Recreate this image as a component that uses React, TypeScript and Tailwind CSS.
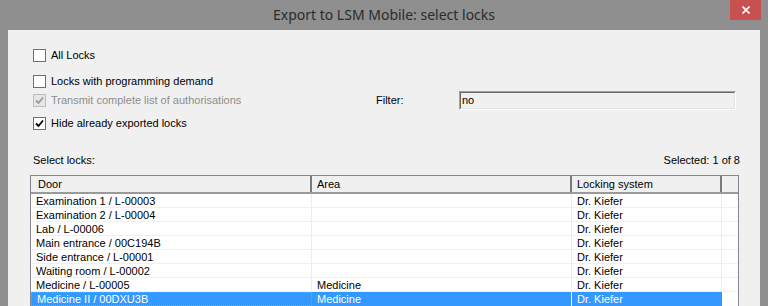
import React from "react";

const rows = [
  { door: "Examination 1 / L-00003", area: "", sys: "Dr. Kiefer" },
  { door: "Examination 2 / L-00004", area: "", sys: "Dr. Kiefer" },
  { door: "Lab / L-00006", area: "", sys: "Dr. Kiefer" },
  { door: "Main entrance / 00C194B", area: "", sys: "Dr. Kiefer" },
  { door: "Side entrance / L-00001", area: "", sys: "Dr. Kiefer" },
  { door: "Waiting room / L-00002", area: "", sys: "Dr. Kiefer" },
  { door: "Medicine / L-00005", area: "Medicine", sys: "Dr. Kiefer" },
  { door: "Medicine II / 00DXU3B", area: "Medicine", sys: "Dr. Kiefer", sel: true },
];

function Check({ checked, disabled }: { checked?: boolean; disabled?: boolean }) {
  return (
    <div
      className={
        "w-[13px] h-[13px] shrink-0 border flex items-center justify-center " +
        (disabled ? "border-[#bcbcbc] bg-[#e6e6e6]" : "border-[#707070] bg-white")
      }
    >
      {checked && (
        <svg width="9" height="9" viewBox="0 0 9 9">
          <path
            d="M1 4.5 L3.5 7 L8 1.5"
            fill="none"
            stroke={disabled ? "#9a9a9a" : "#000"}
            strokeWidth="1.8"
          />
        </svg>
      )}
    </div>
  );
}

export default function App() {
  return (
    <div
      className="w-[768px] h-[306px] bg-[#8f8f8f] flex flex-col overflow-hidden text-[11px] text-black"
      style={{ fontFamily: '"Liberation Sans", Arial, sans-serif' }}
    >
      {/* Title bar */}
      <div className="relative h-[30px] shrink-0 flex items-center justify-center pb-[1px]">
        <span
          className="text-[14px] text-[#2b2b2b] leading-none"
          style={{ fontFamily: '"Noto Sans", "Open Sans", sans-serif' }}
        >
          Export to LSM Mobile: select locks
        </span>
        <div className="absolute left-[730px] top-0 w-[31px] h-[20px] bg-[#c75050] flex items-center justify-center">
          <svg width="8" height="8" viewBox="0 0 8 8">
            <path d="M0.5 0.5 L7.5 7.5 M7.5 0.5 L0.5 7.5" stroke="#fff" strokeWidth="1.6" />
          </svg>
        </div>
      </div>

      {/* Content */}
      <div className="mx-[8px] flex-1 bg-[#f0f0f0] flex flex-col pt-[19px]">
        <div className="pl-[25px] h-[13px] flex items-center gap-[5px]">
          <Check />
          <span className="leading-none">All Locks</span>
        </div>
        <div className="pl-[25px] mt-[13px] h-[13px] flex items-center gap-[5px]">
          <Check />
          <span className="leading-none">Locks with programming demand</span>
        </div>
        <div className="pl-[25px] mt-[3px] h-[19px] flex items-center">
          <div className="w-[343px] flex items-center gap-[5px]">
            <Check checked disabled />
            <span className="leading-none text-[#8d8d8d]">Transmit complete list of authorisations</span>
          </div>
          <div className="w-[83px] leading-none">Filter:</div>
          <div className="w-[277px] h-[19px] border border-t-[#a0a0a0] border-l-[#a0a0a0] border-b-white border-r-white">
            <div className="w-full h-full border border-t-[#696969] border-l-[#696969] border-b-[#e3e3e3] border-r-[#e3e3e3] bg-[#f0f0f0] flex items-center pl-[1px] leading-none">
              no
            </div>
          </div>
        </div>
        <div className="pl-[25px] mt-[7px] h-[13px] flex items-center gap-[5px]">
          <Check checked />
          <span className="leading-none">Hide already exported locks</span>
        </div>

        <div className="mt-[23px] h-[14px] pl-[25px] pr-[20px] flex items-center justify-between leading-none">
          <span>Select locks:</span>
          <span>Selected: 1 of 8</span>
        </div>

        {/* Table */}
        <div className="mt-[8px] ml-[22px] w-[709px] flex-1 border-l border-t border-r border-[#828790] bg-white flex flex-col">
          <div className="h-[18px] shrink-0 flex bg-[#f0f0f0] border-b-2 border-[#9a9a9a]">
            <div className="w-[281px] border-r-2 border-[#7a7a7a] pl-[7px] flex items-center leading-none">Door</div>
            <div className="w-[260px] border-r-2 border-[#7a7a7a] pl-[5px] flex items-center leading-none">Area</div>
            <div className="w-[150px] border-r-2 border-[#7a7a7a] pl-[5px] flex items-center leading-none">Locking system</div>
            <div className="flex-1" />
          </div>
          {rows.map((r, i) => (
            <div
              key={i}
              className={
                "h-[14px] shrink-0 flex leading-none " +
                (r.sel ? "bg-[#3399ff] text-white" : "border-b border-[#f0f0f0]")
              }
            >
              <div
                className={
                  "w-[281px] pl-[5px] pt-[1px] flex items-center " +
                  (r.sel ? "border border-dotted border-[#e08a3a]" : "border-r border-[#ececec]")
                }
              >
                {r.door}
              </div>
              <div className={"w-[260px] pl-[5px] pt-[1px] flex items-center " + (r.sel ? "border-r border-white" : "border-r border-[#ececec]")}>
                {r.area}
              </div>
              <div className={"w-[150px] pl-[5px] pt-[1px] flex items-center " + (r.sel ? "" : "border-r border-[#ececec]")}>
                {r.sys}
              </div>
              <div className="flex-1 bg-white" />
            </div>
          ))}
        </div>
      </div>
    </div>
  );
}
